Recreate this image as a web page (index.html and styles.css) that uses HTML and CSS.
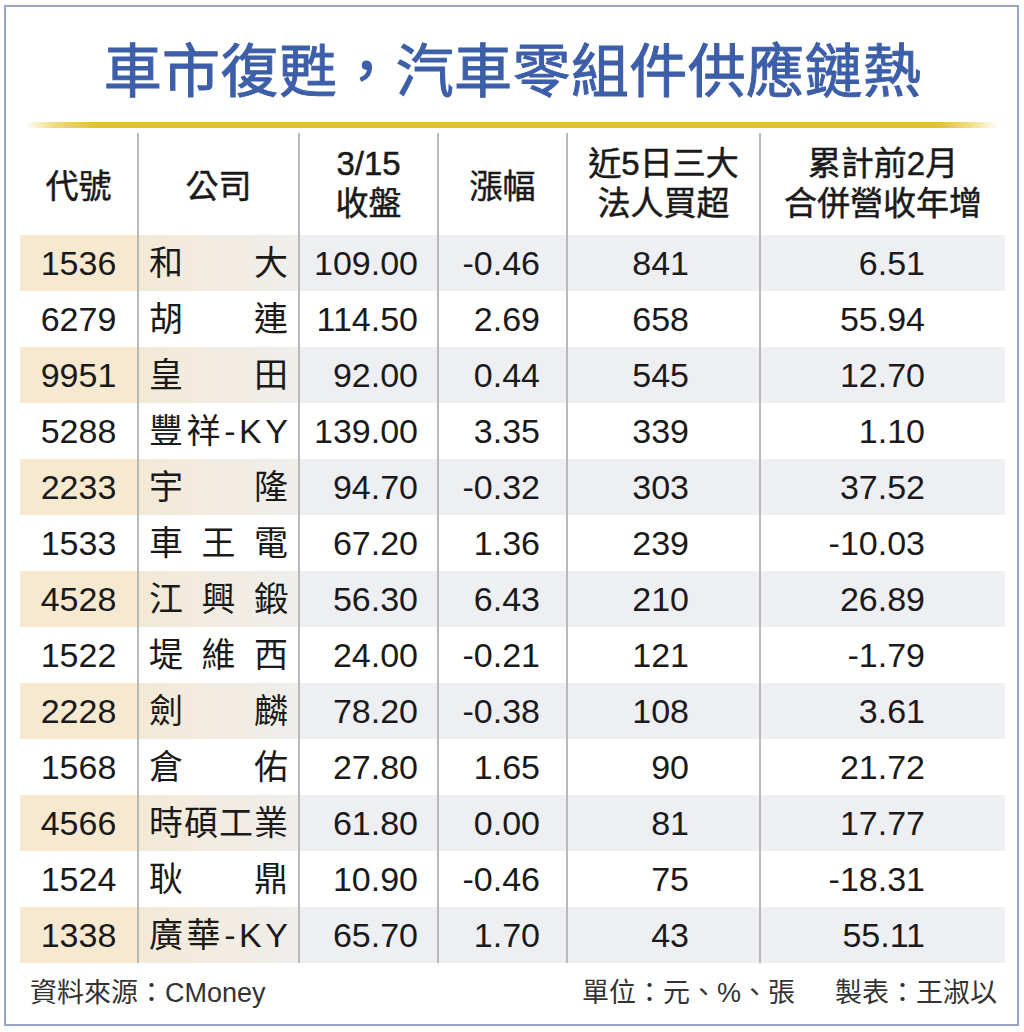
FILE: index.html
```html
<!DOCTYPE html>
<html lang="zh-Hant">
<head>
<meta charset="utf-8">
<title>車市復甦，汽車零組件供應鏈熱</title>
<link rel="stylesheet" href="styles.css">
</head>
<body>
<div class="frame">
  <h1 class="title">車市復甦，汽車零組件供應鏈熱</h1>
  <div class="rule"></div>
  <div class="table">
    <div class="row head">
      <div class="cell c1">代號</div>
      <div class="cell c2">公司</div>
      <div class="cell c3">3/15<br>收盤</div>
      <div class="cell c4">漲幅</div>
      <div class="cell c5">近5日三大<br>法人買超</div>
      <div class="cell c6">累計前2月<br>合併營收年增</div>
    </div>
    <div class="row shade">
      <div class="cell c1">1536</div>
      <div class="cell c2"><span>和</span><span>大</span></div>
      <div class="cell c3">109.00</div>
      <div class="cell c4">-0.46</div>
      <div class="cell c5">841</div>
      <div class="cell c6">6.51</div>
    </div>
    <div class="row">
      <div class="cell c1">6279</div>
      <div class="cell c2"><span>胡</span><span>連</span></div>
      <div class="cell c3">114.50</div>
      <div class="cell c4">2.69</div>
      <div class="cell c5">658</div>
      <div class="cell c6">55.94</div>
    </div>
    <div class="row shade">
      <div class="cell c1">9951</div>
      <div class="cell c2"><span>皇</span><span>田</span></div>
      <div class="cell c3">92.00</div>
      <div class="cell c4">0.44</div>
      <div class="cell c5">545</div>
      <div class="cell c6">12.70</div>
    </div>
    <div class="row">
      <div class="cell c1">5288</div>
      <div class="cell c2"><span>豐</span><span>祥</span><span>-</span><span>K</span><span>Y</span></div>
      <div class="cell c3">139.00</div>
      <div class="cell c4">3.35</div>
      <div class="cell c5">339</div>
      <div class="cell c6">1.10</div>
    </div>
    <div class="row shade">
      <div class="cell c1">2233</div>
      <div class="cell c2"><span>宇</span><span>隆</span></div>
      <div class="cell c3">94.70</div>
      <div class="cell c4">-0.32</div>
      <div class="cell c5">303</div>
      <div class="cell c6">37.52</div>
    </div>
    <div class="row">
      <div class="cell c1">1533</div>
      <div class="cell c2"><span>車</span><span>王</span><span>電</span></div>
      <div class="cell c3">67.20</div>
      <div class="cell c4">1.36</div>
      <div class="cell c5">239</div>
      <div class="cell c6">-10.03</div>
    </div>
    <div class="row shade">
      <div class="cell c1">4528</div>
      <div class="cell c2"><span>江</span><span>興</span><span>鍛</span></div>
      <div class="cell c3">56.30</div>
      <div class="cell c4">6.43</div>
      <div class="cell c5">210</div>
      <div class="cell c6">26.89</div>
    </div>
    <div class="row">
      <div class="cell c1">1522</div>
      <div class="cell c2"><span>堤</span><span>維</span><span>西</span></div>
      <div class="cell c3">24.00</div>
      <div class="cell c4">-0.21</div>
      <div class="cell c5">121</div>
      <div class="cell c6">-1.79</div>
    </div>
    <div class="row shade">
      <div class="cell c1">2228</div>
      <div class="cell c2"><span>劍</span><span>麟</span></div>
      <div class="cell c3">78.20</div>
      <div class="cell c4">-0.38</div>
      <div class="cell c5">108</div>
      <div class="cell c6">3.61</div>
    </div>
    <div class="row">
      <div class="cell c1">1568</div>
      <div class="cell c2"><span>倉</span><span>佑</span></div>
      <div class="cell c3">27.80</div>
      <div class="cell c4">1.65</div>
      <div class="cell c5">90</div>
      <div class="cell c6">21.72</div>
    </div>
    <div class="row shade">
      <div class="cell c1">4566</div>
      <div class="cell c2"><span>時</span><span>碩</span><span>工</span><span>業</span></div>
      <div class="cell c3">61.80</div>
      <div class="cell c4">0.00</div>
      <div class="cell c5">81</div>
      <div class="cell c6">17.77</div>
    </div>
    <div class="row">
      <div class="cell c1">1524</div>
      <div class="cell c2"><span>耿</span><span>鼎</span></div>
      <div class="cell c3">10.90</div>
      <div class="cell c4">-0.46</div>
      <div class="cell c5">75</div>
      <div class="cell c6">-18.31</div>
    </div>
    <div class="row shade">
      <div class="cell c1">1338</div>
      <div class="cell c2"><span>廣</span><span>華</span><span>-</span><span>K</span><span>Y</span></div>
      <div class="cell c3">65.70</div>
      <div class="cell c4">1.70</div>
      <div class="cell c5">43</div>
      <div class="cell c6">55.11</div>
    </div>
  </div>
  <div class="footer">
    <span class="source">資料來源：CMoney</span>
    <span class="meta"><span>單位：元、%、張</span><span>製表：王淑以</span></span>
  </div>
</div>
</body>
</html>
```

FILE: styles.css
```css
* {
  box-sizing: border-box;
}

html, body {
  margin: 0;
  padding: 0;
  background: #ffffff;
}

body {
  font-family: "Liberation Sans", "Noto Sans CJK TC", sans-serif;
  color: #1a1a1a;
}

.frame {
  width: 1015px;
  height: 1021px;
  margin: 5px 0 0 4px;
  border: 2px solid #98a5c6;
  padding: 29px 12px 7px 14px;
  display: flex;
  flex-direction: column;
}

.title {
  margin: 0;
  font-family: "Noto Sans CJK TC", sans-serif;
  font-size: 58px;
  line-height: 62px;
  height: 62px;
  font-weight: 400;
  -webkit-text-stroke: 1px #3d5ea9;
  color: #3d5ea9;
  text-align: center;
  letter-spacing: 0.4px;
}

.rule {
  height: 6px;
  margin: 24px 7px 5px 5px;
  background: linear-gradient(to right,
    rgba(228, 196, 36, 0) 0,
    rgba(228, 196, 36, 0.6) 30px,
    #e3c324 70px,
    #e3c324 calc(100% - 60px),
    rgba(228, 196, 36, 0.5) calc(100% - 25px),
    rgba(228, 196, 36, 0) 100%);
}

.table {
  width: 985px;
  display: flex;
  flex-direction: column;
}

.row {
  display: grid;
  grid-template-columns: 117px 161px 139px 129px 193px 246px;
  height: 56px;
}

.row.head {
  height: 102px;
}

.cell {
  font-size: 34px;
  line-height: 56px;
  white-space: nowrap;
  color: #1a1a1a;
}

.cell + .cell {
  border-left: 2px solid #b9b9b9;
}

.head .cell {
  font-family: "Noto Sans CJK TC", sans-serif;
  font-weight: 400;
  -webkit-text-stroke: 0.5px #1a1a1a;
  font-size: 33px;
  line-height: 40px;
  text-align: center;
  display: flex;
  flex-direction: column;
  justify-content: center;
  padding: 0;
}

.head .c3,
.head .c5,
.head .c6 {
  font-family: "Liberation Sans", "Noto Sans CJK TC", sans-serif;
}

.c1 {
  text-align: center;
}

.c2 {
  display: flex;
  justify-content: space-between;
  padding: 0 10px 0 10px;
}

.c3 {
  text-align: right;
  padding-right: 19px;
}

.c4 {
  text-align: right;
  padding-right: 26px;
}

.c5 {
  text-align: right;
  padding-right: 70px;
}

.c6 {
  text-align: right;
  padding-right: 80px;
}

.shade .cell {
  background: #eeeff2;
}

.shade .c1 {
  background: #f6e9d0;
}

.shade .c2 {
  background: linear-gradient(to right, #f4e9d6 0%, #efeeec 100%);
}

.footer {
  height: 54px;
  display: flex;
  justify-content: space-between;
  align-items: center;
  padding: 0 8px 0 10px;
  font-size: 27px;
  color: #333333;
  white-space: nowrap;
}

.meta {
  display: flex;
  gap: 40px;
}
```
